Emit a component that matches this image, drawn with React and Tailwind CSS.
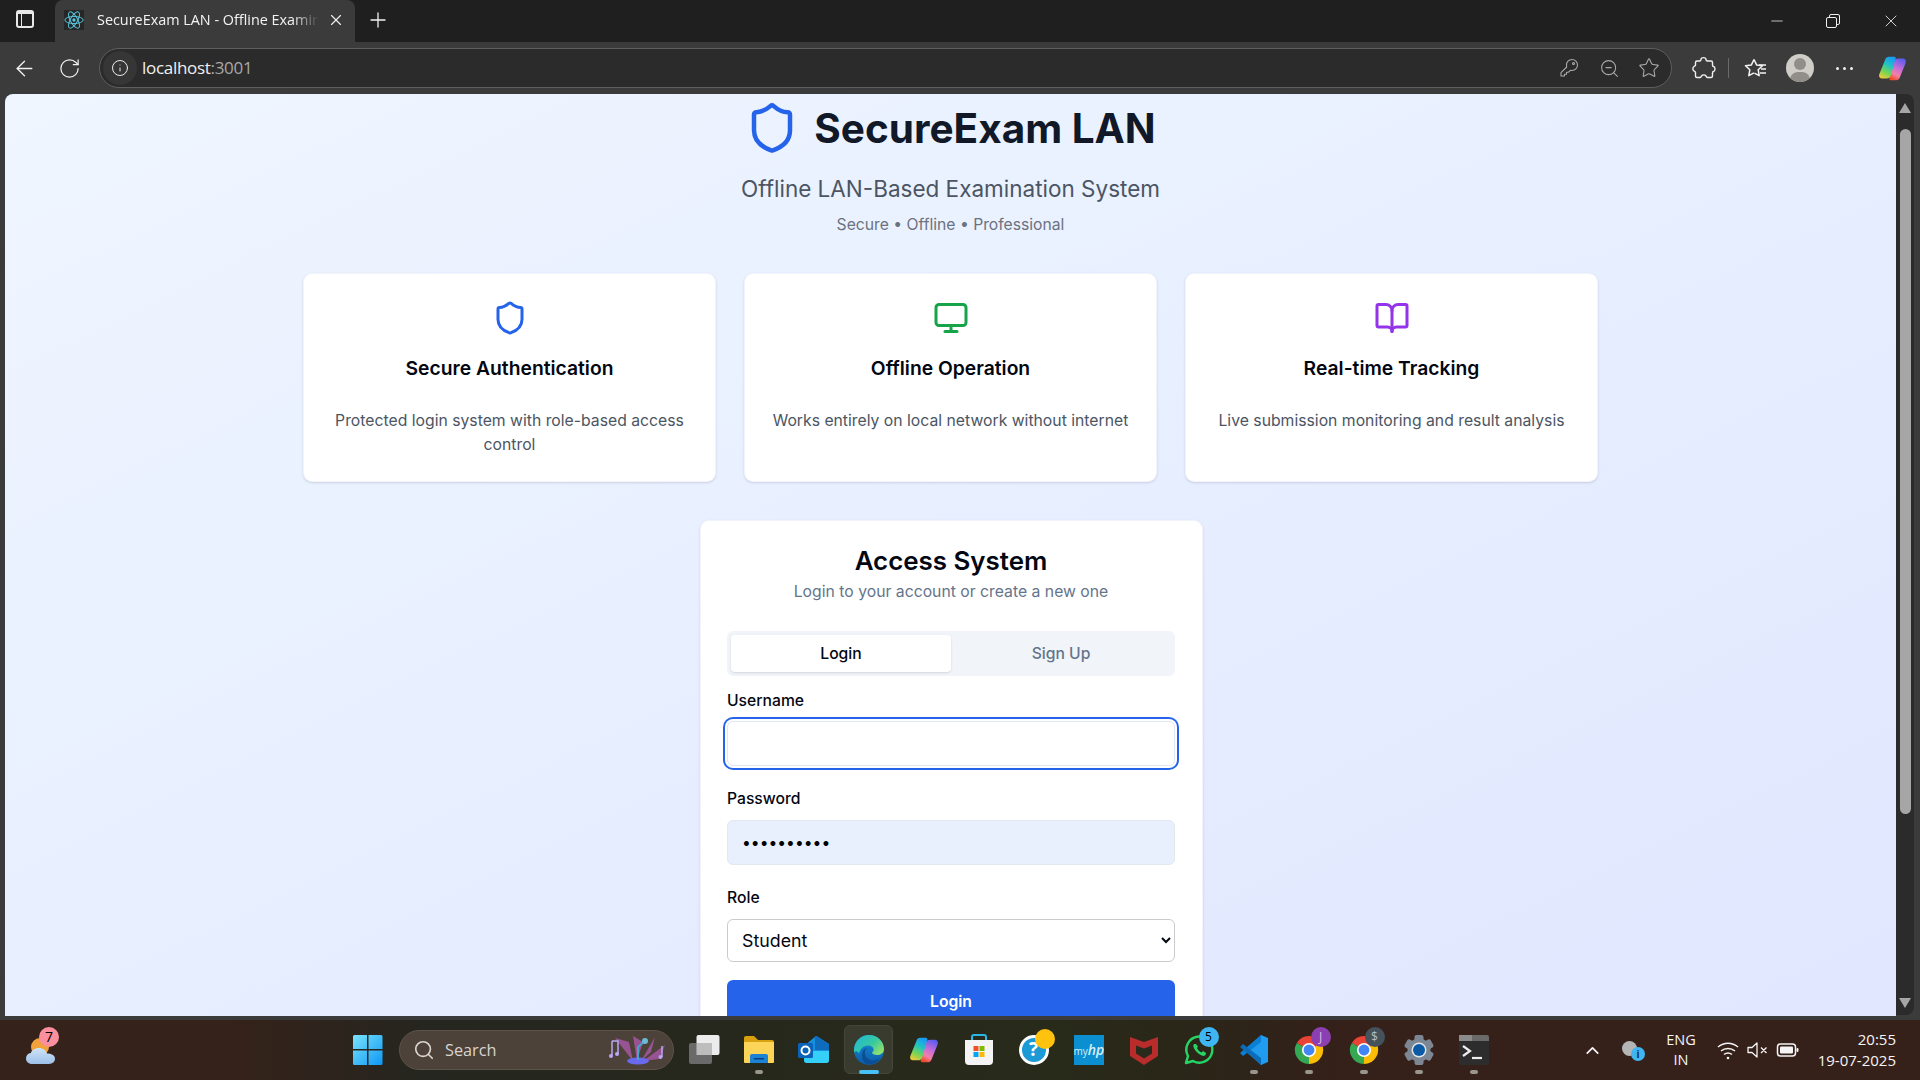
import { ArrowLeft, BookOpen, ChevronUp, Info, Minus, Monitor, Plus, RotateCw, Search, Shield, Star, X, ZoomOut } from "lucide-react";

const FEATURES = [
  { icon: Shield, color: "text-[#2563eb]", title: "Secure Authentication", text: "Protected login system with role-based access control" },
  { icon: Monitor, color: "text-[#16a34a]", title: "Offline Operation", text: "Works entirely on local network without internet" },
  { icon: BookOpen, color: "text-[#9333ea]", title: "Real-time Tracking", text: "Live submission monitoring and result analysis" },
];

const Copilot = ({ size = 30, id }) => (
  <svg width={size} height={size} viewBox="0 0 32 32">
    <defs>
      <linearGradient id={`${id}A`} x1="0.6" y1="0" x2="0.2" y2="1">
        <stop offset="0" stopColor="#1a9df0" />
        <stop offset="0.35" stopColor="#22c4c0" />
        <stop offset="0.7" stopColor="#7bd651" />
        <stop offset="1" stopColor="#f4c93a" />
      </linearGradient>
      <linearGradient id={`${id}B`} x1="0.7" y1="0" x2="0.3" y2="1">
        <stop offset="0" stopColor="#5a5cf0" />
        <stop offset="0.45" stopColor="#c86dd7" />
        <stop offset="0.75" stopColor="#f47fa8" />
        <stop offset="1" stopColor="#ee4b2b" />
      </linearGradient>
    </defs>
    <path d="M20 29h-6c-1 0-2-1-1.500-2L18 8c.6-2 2-3 4-3h5c3 0 4.500 2 3.500 5L24 26c-.7 2-2 3-4 3z" fill={`url(#${id}B)`} />
    <path d="M12 3h6c1 0 2 1 1.500 2L14 24c-.6 2-2 3-4 3H5c-3 0-4.500-2-3.500-5L8 6c.7-2 2-3 4-3z" fill={`url(#${id}A)`} />
  </svg>
);

const Atom = () => (
  <svg width="20" height="20" viewBox="0 0 24 24" fill="none" stroke="#58c4dc" strokeWidth="1.200">
    <ellipse cx="12" cy="12" rx="11" ry="4.300" />
    <ellipse cx="12" cy="12" rx="11" ry="4.300" transform="rotate(60 12 12)" />
    <ellipse cx="12" cy="12" rx="11" ry="4.300" transform="rotate(120 12 12)" />
    <circle cx="12" cy="12" r="2" fill="#58c4dc" stroke="none" />
  </svg>
);

const KeyIcon = () => (
  <svg width="20" height="20" viewBox="0 0 20 20" fill="none" stroke="#a9a9a9" strokeWidth="1.100" strokeLinejoin="round">
    <path d="M13 1.500a5.500 5.500 0 0 1 0 11c-.6 0-1.100-.1-1.600-.2L9.500 14.200H7.500v2H5.500v1.800H2v-3.300l5.700-5.700c-.1-.5-.2-1-.2-1.600A5.500 5.500 0 0 1 13 1.500z" />
    <circle cx="14.500" cy="5.500" r="1" />
  </svg>
);

const Weather = () => (
  <div className="relative w-[32px] h-[32px] ml-[25px]">
    <svg width="32" height="32" viewBox="0 0 32 32">
      <defs>
        <linearGradient id="cloud" x1="0" y1="0" x2="0" y2="1">
          <stop offset="0" stopColor="#cfe3f7" />
          <stop offset="1" stopColor="#9dc0e8" />
        </linearGradient>
      </defs>
      <circle cx="15" cy="13" r="9" fill="#f2a23a" />
      <path d="M7 30c-3.500 0-6-2.400-6-5.500 0-2.800 2-5 4.800-5.400C7 15.500 10.500 14 14 14c4 0 7 2.300 8 5.500 4 0 8 1.500 8 5.300 0 3-2.500 5.200-6 5.200z" fill="url(#cloud)" />
    </svg>
    <div className="absolute top-[-7px] left-[14px] w-[20px] h-[20px] rounded-full bg-[#fb8f9d] text-black text-[14px] leading-[20px] text-center font-['Open_Sans',sans-serif]">7</div>
  </div>
);

const WinLogo = () => (
  <svg width="30" height="30" viewBox="0 0 30 30">
    <defs>
      <linearGradient id="win" x1="0" y1="0" x2="1" y2="1">
        <stop offset="0" stopColor="#7ae4fb" />
        <stop offset="1" stopColor="#0d97f5" />
      </linearGradient>
    </defs>
    <path d="M0 1.500A1.500 1.500 0 0 1 1.500 0H14v14H0zM15.500 0H28a1.500 1.500 0 0 1 1.500 1.500V14h-14zM0 15.500h14V30H1.500A1.500 1.500 0 0 1 0 28.500zM15.500 15.500h14v13a1.500 1.500 0 0 1-1.500 1.500H15.500z" fill="url(#win)" />
  </svg>
);

const MicArt = () => (
  <svg width="58" height="30" viewBox="0 0 58 30" fill="none">
    <path d="M24 26 6 3l14 4zM28 26 24 1l10 6zM32 26 46 2l-4 15zM34 26 56 10l-6 14z" fill="#b05ab0" opacity="0.75" />
    <ellipse cx="29" cy="26" rx="11" ry="3.500" fill="#6a6af0" />
    <path d="M29 25V12l7-6" stroke="#4aa3c8" strokeWidth="2" />
    <circle cx="36" cy="6" r="3" fill="#6bbad6" />
    <path d="M3 6h6v12M3 6v14M9 18v1" stroke="#b9a8f5" strokeWidth="1.500" />
    <circle cx="2" cy="21" r="2" fill="#b9a8f5" />
    <circle cx="8" cy="19" r="2" fill="#b9a8f5" />
    <path d="M53 11v11" stroke="#b9a8f5" strokeWidth="1.500" />
    <circle cx="51.500" cy="22" r="2" fill="#b9a8f5" />
  </svg>
);

const TaskView = () => (
  <svg width="32" height="30" viewBox="0 0 32 30">
    <rect x="8.500" y="0" width="23" height="20" rx="2" fill="#ececec" />
    <rect x="1" y="8" width="23" height="21" rx="2" fill="#6a6a6a" />
    <rect x="8.500" y="8" width="15.500" height="12" fill="#bdbdbd" />
  </svg>
);

const Explorer = () => (
  <svg width="32" height="30" viewBox="0 0 32 30">
    <path d="M1 3a2 2 0 0 1 2-2h8l4 4h14a2 2 0 0 1 2 2v4H1z" fill="#d9a00f" />
    <path d="M1 7h30v20a1 1 0 0 1-1 1H2a1 1 0 0 1-1-1z" fill="#fbd458" />
    <path d="M7 21a2 2 0 0 1 2-2h14a2 2 0 0 1 2 2v7H7z" fill="#1b82d4" />
    <rect x="11" y="23" width="10" height="1.500" fill="#083f78" />
  </svg>
);

const Outlook = () => (
  <svg width="32" height="30" viewBox="0 0 32 30">
    <path d="M6 11 18 1l13 8v16a3 3 0 0 1-3 3H9a3 3 0 0 1-3-3z" fill="#1490df" />
    <path d="M17 1h2l12 8v6H17z" fill="#0f6cbd" />
    <path d="M6 16h25v9a3 3 0 0 1-3 3H9a3 3 0 0 1-3-3z" fill="#35d0f7" />
    <rect x="0" y="8" width="15" height="15" rx="1.500" fill="#0a63b8" />
    <circle cx="7.500" cy="15.500" r="4" fill="none" stroke="#fff" strokeWidth="2" />
  </svg>
);

const Edge = () => (
  <svg width="32" height="32" viewBox="0 0 32 32">
    <defs>
      <linearGradient id="edgeA" x1="0" y1="0" x2="1" y2="0.700">
        <stop offset="0" stopColor="#20b6dc" />
        <stop offset="0.6" stopColor="#36c8a0" />
        <stop offset="1" stopColor="#8fe06c" />
      </linearGradient>
      <linearGradient id="edgeB" x1="0" y1="0" x2="0" y2="1">
        <stop offset="0" stopColor="#1890d8" />
        <stop offset="1" stopColor="#0c5aa8" />
      </linearGradient>
    </defs>
    <circle cx="16" cy="16" r="15" fill="url(#edgeB)" />
    <path d="M1 15C2 6 9 1 16 1c9 0 15 7 15 14 0 4-3.500 6-7 6-3 0-5-1-5-2.500 3-1.500 2-7-4-7-5 0-8 4-9 8-1.500-3-4-3-5-.5z" fill="url(#edgeA)" />
    <path d="M14 14c-3 2-3 8 1 11 3 2 8 2 12-1-3 5-8 7-13 6 -5-2-6-9-4-13 1-2 3-3 4-3z" fill="#0a4f96" />
  </svg>
);

const Store = () => (
  <svg width="30" height="32" viewBox="0 0 30 32">
    <path d="M8 6V3a2 2 0 0 1 2-2h10a2 2 0 0 1 2 2v3" fill="none" stroke="#29b6e8" strokeWidth="2" />
    <path d="M1 6h28v21a4 4 0 0 1-4 4H5a4 4 0 0 1-4-4z" fill="#f4f4f4" />
    <rect x="9.500" y="12" width="5" height="5" fill="#f25022" />
    <rect x="15.500" y="12" width="5" height="5" fill="#7fba00" />
    <rect x="9.500" y="18" width="5" height="5" fill="#00a4ef" />
    <rect x="15.500" y="18" width="5" height="5" fill="#ffb900" />
  </svg>
);

const McAfee = () => (
  <svg width="28" height="30" viewBox="0 0 28 30">
    <path d="M0 2 14 7 28 2v19L14 30 0 21z" fill="#b82c2c" />
    <path d="M6 10.500 14 13.500l8-3v8l-8 5-8-5z" fill="#2a2a1c" />
  </svg>
);

const WhatsApp = () => (
  <svg width="32" height="32" viewBox="0 0 32 32" fill="none">
    <path d="M3 29l2-7a13 13 0 1 1 5 5z" stroke="#25d366" strokeWidth="2.500" strokeLinejoin="round" />
    <path d="M11 10c-1 1-1 3 1 6s5 5 8 6c2 0 3-1 3-3l-3-2-1.500 1.500c-2-1-3.500-2.500-4.500-4.500L15 12.500 13 10z" fill="#25d366" />
  </svg>
);

const VsCode = () => (
  <svg width="30" height="32" viewBox="0 0 30 32">
    <path d="M22 1 29 4v24l-7 3L8 17z" fill="#1f9cf0" />
    <path d="M22 1 1 19l3 3L22 8z" fill="#0a7fd4" />
    <path d="M22 31 1 13l3-3 18 14z" fill="#0c6cb8" />
  </svg>
);

const Chrome = () => (
  <svg width="30" height="32" viewBox="0 0 32 32">
    <path d="M3 8.500A15 15 0 0 1 29 8.500L16 16z" fill="#ea4335" />
    <path d="M29 8.500A15 15 0 0 1 16 31L16 16z" fill="#fbbc04" />
    <path d="M16 31A15 15 0 0 1 3 8.500L16 16z" fill="#34a853" />
    <circle cx="16" cy="16" r="7.500" fill="#fff" />
    <circle cx="16" cy="16" r="5.800" fill="#4285f4" />
  </svg>
);

const Gear = () => (
  <svg width="32" height="32" viewBox="0 0 32 32">
    {[0, 60, 120].map((r) => (
      <rect key={r} x="11.500" y="1" width="9" height="30" rx="2" fill="#7d8793" transform={`rotate(${r} 16 16)`} />
    ))}
    <circle cx="16" cy="16" r="11.500" fill="#7d8793" />
    <circle cx="16" cy="16" r="7.500" fill="#dfe5ea" />
    <circle cx="16" cy="16" r="6" fill="#0c5aa6" />
  </svg>
);

const Terminal = () => (
  <svg width="30" height="30" viewBox="0 0 30 30" fill="none">
    <rect width="30" height="30" rx="2" fill="#2d2d2d" />
    <path d="M0 2a2 2 0 0 1 2-2h26a2 2 0 0 1 2 2v4H0z" fill="#6a6a6a" />
    <path d="M0 0h13v6H0z" fill="#8b8b8b" />
    <path d="M4 11l7 5-7 5" stroke="#ededed" strokeWidth="2.200" />
    <path d="M13 23h10" stroke="#ededed" strokeWidth="2.200" />
  </svg>
);

const Slot = ({ children, active, dot }) => (
  <div className="relative w-[55px] h-full flex items-center justify-center shrink-0">
    {active && <div className="absolute top-[5px] left-[3px] w-[49px] h-[49px] rounded-md bg-[#3a3b2f] border border-[#45463a]" />}
    <div className="relative flex">{children}</div>
    {active && <div className="absolute bottom-[6px] left-[18px] w-[20px] h-[4px] rounded-full bg-[#47c0f5]" />}
    {dot && <div className="absolute bottom-[6px] left-[24px] w-[8px] h-[4px] rounded-full bg-[#9a968f]" />}
  </div>
);

const Badge = ({ className, children }) => (
  <div className={`absolute w-[20px] h-[20px] rounded-full text-[12px] leading-[20px] text-center font-['Open_Sans',sans-serif] ${className}`}>{children}</div>
);

const FavStar = () => (
  <svg width="26" height="26" viewBox="0 0 26 26" fill="none" stroke="#f3f3f3" strokeWidth="1.500">
    <path d="M13 4.500l2.600 5.400 5.900.8-4.300 4.100 1 5.900-4.700-2.500" strokeLinejoin="round" />
    <path d="M13 4.500l-2.600 5.400-5.900.8 4.300 4.100-1 5.900 5.200-2.800" strokeLinejoin="round" />
    <path d="M18 10h7M20 14h5M19 18h6" />
  </svg>
);

export default function App() {
  return (
    <div className="w-[1920px] h-[1080px] overflow-hidden flex flex-col bg-[#3b3b3b] font-['Inter',sans-serif]">
      {/* Title bar */}
      <div className="h-[42px] shrink-0 bg-[#1f1f1f] flex items-end text-[#f3f3f3]">
        <div className="w-[55px] h-full flex items-center justify-center pr-[5px] pb-[4px]">
          <div className="w-[18px] h-[18px] rounded-[3px] border-2 border-[#e8e8e8] border-t-[4px] flex">
            <div className="w-[4px] h-full border-r border-[#e8e8e8]" />
          </div>
        </div>
        <div className="w-[300px] h-[42px] rounded-t-lg bg-[#3b3b3b] flex items-center pb-[2px]">
          <div className="ml-[9px] w-[20px] h-[20px] bg-[#262626] flex items-center justify-center"><Atom /></div>
          <div className="ml-[13px] w-[222px] whitespace-nowrap overflow-hidden text-[14.400px] font-['Open_Sans',sans-serif] [mask-image:linear-gradient(90deg,#000_88%,transparent)]">SecureExam LAN - Offline Examination System</div>
          <X size={18} strokeWidth={1.500} className="ml-[8px]" />
        </div>
        <div className="ml-[11px] h-full flex items-center pb-[2px]"><Plus size={24} strokeWidth={1.300} /></div>
        <div className="ml-auto h-full flex items-center">
          <Minus size={18} strokeWidth={1} className="-ml-[2px]" />
          <div className="ml-[40px] relative w-[14px] h-[14px]">
            <div className="absolute top-0 right-0 w-[11px] h-[11px] border border-[#eee] rounded-[2px]" />
            <div className="absolute bottom-0 left-0 w-[11px] h-[11px] border border-[#eee] bg-[#1f1f1f] rounded-[2px]" />
          </div>
          <X size={20} strokeWidth={1} className="ml-[41px] mr-[19px]" />
        </div>
      </div>

      {/* Toolbar */}
      <div className="h-[52px] shrink-0 flex items-center text-[#f0f0f0]">
        <ArrowLeft size={25} strokeWidth={1.300} className="ml-[12px]" />
        <RotateCw size={23} strokeWidth={1.300} className="ml-[21px]" />
        <div className="ml-[18px] w-[1573px] h-[40px] rounded-full bg-[#2b2b2b] border border-[#5e5e5e] flex items-center">
          <div className="ml-[3px] w-[34px] h-[34px] rounded-full bg-[#363636] flex items-center justify-center"><Info size={18} strokeWidth={1.300} /></div>
          <div className="ml-[5px] text-[17px] tracking-[-0.3px] font-['Open_Sans',sans-serif]">localhost<span className="text-[#a8a8a8]">:3001</span></div>
          <div className="ml-auto flex items-center text-[#a9a9a9]">
            <KeyIcon />
            <ZoomOut size={21} strokeWidth={1.200} className="ml-[20px]" />
            <Star size={22} strokeWidth={1.200} className="ml-[18px] mr-[11px]" />
          </div>
        </div>
        <svg width="24" height="24" viewBox="0 0 24 24" fill="none" stroke="#f0f0f0" strokeWidth="1.400" strokeLinejoin="round" className="ml-[20px]">
          <path d="M9 3.500c0-2.500 5-2.500 5 0 0 1 .5 1.500 1.500 1.500H19c1 0 1.500 .5 1.500 1.500V9c0 1 .5 1.500 1 1.500 2 .5 2 4.500 0 5-.5 0-1 .5-1 1.500v3c0 1-.5 1.500-1.500 1.500h-3.500c-1 0-1-1-1.500-1.500-1-1.500-3.500-1.500-4.500 0C9 20.500 9 21.500 8 21.500H5c-1 0-1.500-.5-1.500-1.500v-3.500c0-1-1-1-1.500-1.500-1.500-1-1.500-3.500 0-4.500.5-.5 1.500-.5 1.500-1.500V6.500C3.500 5.500 4 5 5 5h2.500C8.500 5 9 4.500 9 3.500z" />
        </svg>
        <div className="ml-[12px] w-px h-[20px] bg-[#6a6a6a]" />
        <div className="ml-[12px] flex"><FavStar /></div>
        <div className="ml-[19px] w-[28px] h-[28px] rounded-full bg-[#cfcdc7] relative overflow-hidden">
          <div className="absolute top-[4px] left-[8px] w-[12px] h-[12px] rounded-full bg-[#918e89]" />
          <div className="absolute top-[18px] left-[4px] w-[20px] h-[16px] rounded-full bg-[#918e89]" />
        </div>
        <div className="ml-[22px] w-[17px] flex justify-between">
          <div className="w-[3px] h-[3px] rounded-full bg-[#eee]" />
          <div className="w-[3px] h-[3px] rounded-full bg-[#eee]" />
          <div className="w-[3px] h-[3px] rounded-full bg-[#eee]" />
        </div>
        <div className="ml-[25px] flex"><Copilot size={29} id="cpTop" /></div>
      </div>

      {/* Page and scrollbar */}
      <div className="h-[922px] shrink-0 flex pl-[5px]">
        <div className="w-[1891px] h-full overflow-hidden rounded-tl-lg bg-linear-to-br from-[#eff6ff] to-[#e0e7ff] flex flex-col items-center">
          <div className="mt-[4px] h-[60px] flex items-center justify-center gap-[15px] shrink-0">
            <Shield size={54} strokeWidth={2} className="text-[#2563eb]" />
            <h1 className="pt-[2px] text-[40.500px] leading-[60px] font-bold text-[#111827]">SecureExam LAN</h1>
          </div>
          <p className="mt-[14px] text-[22.500px] leading-[33px] text-[#4b5563]">Offline LAN-Based Examination System</p>
          <p className="mt-[8px] text-[15.700px] leading-[23px] text-[#6b7280]">Secure • Offline • Professional</p>

          <div className="mt-[37px] w-[1295px] grid grid-cols-3 gap-[28px] shrink-0">
            {FEATURES.map((f) => (
              <div key={f.title} className="h-[209px] bg-white rounded-[9px] border border-[#f1f4fb] shadow-sm flex flex-col items-center px-[20px] pt-[26px]">
                <f.icon size={36} strokeWidth={2} className={f.color} />
                <h3 className="mt-[16px] text-[19.300px] leading-[33px] font-semibold text-[#030712]">{f.title}</h3>
                <p className="mt-[24px] text-[15.750px] leading-[23.500px] text-[#4b5563] text-center">{f.text}</p>
              </div>
            ))}
          </div>

          <div className="mt-[38px] ml-[2px] w-[503px] flex-1 bg-white rounded-t-[9px] border border-b-0 border-[#f1f4fb] shadow-sm pl-[26px] pr-[27px] flex flex-col">
            <h2 className="mt-[22px] text-[25.900px] leading-[36px] font-semibold text-[#030712] text-center">Access System</h2>
            <p className="mt-[1px] text-[15.750px] leading-[24px] text-[#64748b] text-center">Login to your account or create a new one</p>
            <div className="mt-[27px] h-[45px] shrink-0 rounded-md bg-[#f1f5f9] p-[4px] grid grid-cols-2 text-[15.700px] font-medium">
              <div className="rounded-[4px] bg-white shadow-sm flex items-center justify-center text-[#030712]">Login</div>
              <div className="flex items-center justify-center text-[#64748b]">Sign Up</div>
            </div>
            <label className="mt-[13px] text-[15.700px] leading-[23px] font-medium text-[#030712]">Username</label>
            <input readOnly className="mt-[9px] h-[45px] w-full shrink-0 rounded-md border border-[#e2e8f0] bg-white ring-2 ring-[#2563eb] ring-offset-2 outline-none" />
            <label className="mt-[21px] text-[15.700px] leading-[23px] font-medium text-[#030712]">Password</label>
            <input readOnly type="password" value="password12" className="mt-[10px] h-[45px] w-full shrink-0 rounded-md border border-[#e2e8f0] bg-[#e8f0fe] px-[14px] text-[15.700px] text-black outline-none" />
            <label className="mt-[21px] text-[15.700px] leading-[23px] font-medium text-[#030712]">Role</label>
            <select defaultValue="Student" className="mt-[10px] h-[43px] w-full shrink-0 rounded-md border border-[#cbcbcb] bg-white px-[10px] text-[17.800px] text-[#030712] outline-none">
              <option>Student</option>
              <option>Admin</option>
            </select>
            <button className="mt-[18px] h-[45px] w-full shrink-0 rounded-md bg-[#2563eb] pb-[2px] text-white text-[15.700px] font-semibold">Login</button>
          </div>
        </div>

        {/* Scrollbar */}
        <div className="w-[18px] h-[921px] bg-[#2b2b2b] rounded-r-lg flex flex-col items-center pt-[9px]">
          <div className="w-0 h-0 border-x-[6.500px] border-x-transparent border-b-[10px] border-b-[#a6a6a6]" />
          <div className="mt-[16px] w-[11px] h-[685px] rounded-full bg-[#a6a6a6]" />
          <div className="mt-[184px] w-0 h-0 border-x-[6.500px] border-x-transparent border-t-[10px] border-t-[#a6a6a6]" />
        </div>
      </div>

      <div className="h-[4px] shrink-0" />

      {/* Taskbar */}
      <div className="h-[60px] shrink-0 flex items-center bg-[linear-gradient(90deg,#35221a_0%,#35221a_12%,#25261f_22%,#282a1a_55%,#2a2618_62%,#35201a_70%,#35201a_100%)]">
        <Weather />
        <div className="ml-[283px] h-full"><Slot><WinLogo /></Slot></div>
        <div className="ml-[4px] w-[275px] h-[40px] shrink-0 rounded-full bg-[#4d4239] border border-[#5d5349] flex items-center text-[#d9d5d0]">
          <Search size={22} strokeWidth={1.800} className="ml-[13px]" />
          <span className="ml-[10px] text-[16.300px] font-['Open_Sans',sans-serif]">Search</span>
          <div className="ml-auto mr-[6px] flex"><MicArt /></div>
        </div>
        <div className="ml-[2px] h-full flex">
          <Slot><TaskView /></Slot>
          <Slot dot><Explorer /></Slot>
          <Slot><Outlook /></Slot>
          <Slot active><Edge /></Slot>
          <Slot><Copilot size={30} id="cpBar" /></Slot>
          <Slot><Store /></Slot>
          <Slot>
            <div className="w-[30px] h-[30px] rounded-full bg-[#1c9ad6] border-[3px] border-white text-white text-[19px] leading-[23px] text-center font-bold font-['Open_Sans',sans-serif]">?</div>
            <div className="absolute top-[-6px] left-[16px] w-[20px] h-[20px] rounded-full bg-[#ffc20e]" />
          </Slot>
          <Slot>
            <div className="w-[30px] h-[30px] bg-[#0b8fd0] text-[#d6eef9] text-[10px] leading-[30px] text-center font-['Open_Sans',sans-serif]">my<span className="italic font-semibold text-[14px]">hp</span></div>
          </Slot>
          <Slot><McAfee /></Slot>
          <Slot>
            <WhatsApp />
            <Badge className="top-[-7px] left-[16px] bg-[#3fb6f2] text-black">5</Badge>
          </Slot>
          <Slot dot><VsCode /></Slot>
          <Slot dot>
            <Chrome />
            <Badge className="top-[-7px] left-[17px] bg-[#8b3fb0] text-[#e0b8ef]">J</Badge>
          </Slot>
          <Slot dot>
            <Chrome />
            <Badge className="top-[-7px] left-[16px] bg-[#45525c] text-[#b5bec6]">$</Badge>
          </Slot>
          <Slot dot><Gear /></Slot>
          <Slot dot><Terminal /></Slot>
        </div>

        {/* Tray */}
        <div className="flex-1 h-full flex items-center text-[#f5f5f5] font-['Open_Sans',sans-serif]">
          <ChevronUp size={21} strokeWidth={2} className="ml-[81px]" />
          <div className="ml-[18px] relative w-[24px] h-[24px]">
            <div className="absolute top-[3px] left-[1px] w-[15px] h-[15px] rounded-full bg-[#b5b5b5]" />
            <div className="absolute top-[9px] left-[10px] w-[14px] h-[14px] rounded-full bg-[#3fb6f2] text-[10px] leading-[14px] text-center font-bold text-[#10324a]">i</div>
          </div>
          <div className="ml-[16px] w-[40px] text-center text-[14.500px] leading-[20px]">ENG<br />IN</div>
          <svg width="24" height="24" viewBox="0 0 24 24" fill="none" stroke="#f5f5f5" strokeWidth="1.500" className="ml-[15px]">
            <path d="M2 9c6-5 14-5 20 0M5 13c4-3.500 10-3.500 14 0M8 16.500c2.500-2 5.500-2 8 0" />
            <circle cx="12" cy="20" r="1.300" fill="#f5f5f5" stroke="none" />
          </svg>
          <svg width="24" height="24" viewBox="0 0 24 24" fill="none" stroke="#f5f5f5" strokeWidth="1.300" strokeLinejoin="round" className="ml-[6px]">
            <path d="M2 9.500h4L11 5v14l-5-4.500H2zM15 9.500l5.500 5.500M20.500 9.500 15 15" />
          </svg>
          <svg width="24" height="24" viewBox="0 0 24 24" className="ml-[6px]">
            <rect x="1.500" y="6" width="18" height="12" rx="3" fill="none" stroke="#f5f5f5" strokeWidth="1.500" />
            <rect x="4" y="8.500" width="13" height="7" rx="1" fill="#f5f5f5" />
            <rect x="20.500" y="10" width="2" height="4" rx="1" fill="#f5f5f5" />
          </svg>
          <div className="ml-auto mr-[24px] text-right text-[15px] leading-[21px]">20:55<br />19-07-2025</div>
        </div>
      </div>
    </div>
  );
}
